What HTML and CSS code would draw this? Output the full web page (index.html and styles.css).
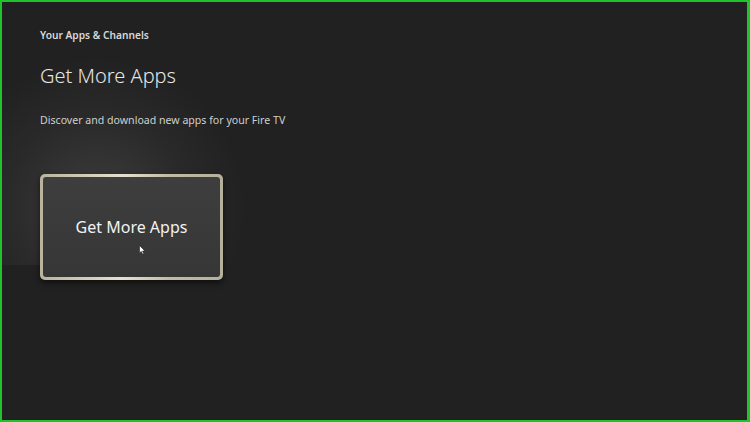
FILE: index.html
```html
<!DOCTYPE html>
<html lang="en">
<head>
<meta charset="UTF-8" />
<meta name="viewport" content="width=device-width, initial-scale=1" />
<title>Get More Apps</title>
<link rel="stylesheet" href="styles.css">
</head>
<body>

<div class="screen">
  <header class="top">
    <div class="crumb">Your Apps &amp; Channels</div>
    <h1 class="title">Get More Apps</h1>
    <p class="subtitle">Discover and download new apps for your Fire TV</p>
  </header>

  <main class="tiles">
    <div class="tile focused">
      <div class="tile-inner">
        <span class="tile-label">Get More Apps</span>
        <!-- pointer cursor -->
        <svg class="cursor" width="7" height="10" viewBox="0 0 7 10">
          <path d="M0.5 0.5 L0.5 8 L2.3 6.4 L3.6 9.3 L4.8 8.8 L3.6 6 L6 6 Z" fill="#fff" stroke="#222" stroke-width="0.6"/>
        </svg>
      </div>
    </div>
  </main>
</div>

</body>
</html>
```

FILE: styles.css
```css
body {
  margin: 0;
  padding: 0;
  background: #1b1b1b;
  font-family: "Noto Sans", "Open Sans", sans-serif;
}
.screen {
  box-sizing: border-box;
  width: 750px;
  height: 422px;
  border: 2px solid #1fc42a;
  border-right-width: 3px;
  background:
    radial-gradient(circle at 95px 205px, rgba(255,255,255,0.13), rgba(255,255,255,0.04) 90px, transparent 150px) no-repeat 0 0 / 100% 263px,
    #212121;
  padding: 0 38px;
  overflow: hidden;
}
.top {
  padding-top: 26px;
}
.crumb {
  color: #d8d8d8;
  font-size: 10.2px;
  font-weight: 600;
  line-height: 14px;
}
.title {
  margin: 21px 0 0;
  color: #e6e6e6;
  font-size: 20px;
  font-weight: 300;
  line-height: 26px;
}
.subtitle {
  margin: 23px 0 0;
  color: #cfcfcf;
  font-size: 10.6px;
  line-height: 16px;
}
.tiles {
  margin-top: 46px;
  display: flex;
}
.tile {
  width: 183px;
  height: 106px;
  box-sizing: border-box;
  padding: 3px;
  border-radius: 5px;
  background: linear-gradient(90deg, #b9b39e, #e4e0cf 45%, #c2bca7 70%, #b5b09c);
  box-shadow: 0 3px 6px rgba(0,0,0,0.55);
}
.tile-inner {
  position: relative;
  height: 100%;
  border-radius: 3px;
  background: linear-gradient(180deg, #3e3e3e, #363636);
  display: flex;
  align-items: center;
  justify-content: center;
}
.tile-label {
  color: #f2f2f2;
  font-size: 16px;
  font-weight: 400;
}
.cursor {
  position: absolute;
  left: 96px;
  top: 68px;
}
```
